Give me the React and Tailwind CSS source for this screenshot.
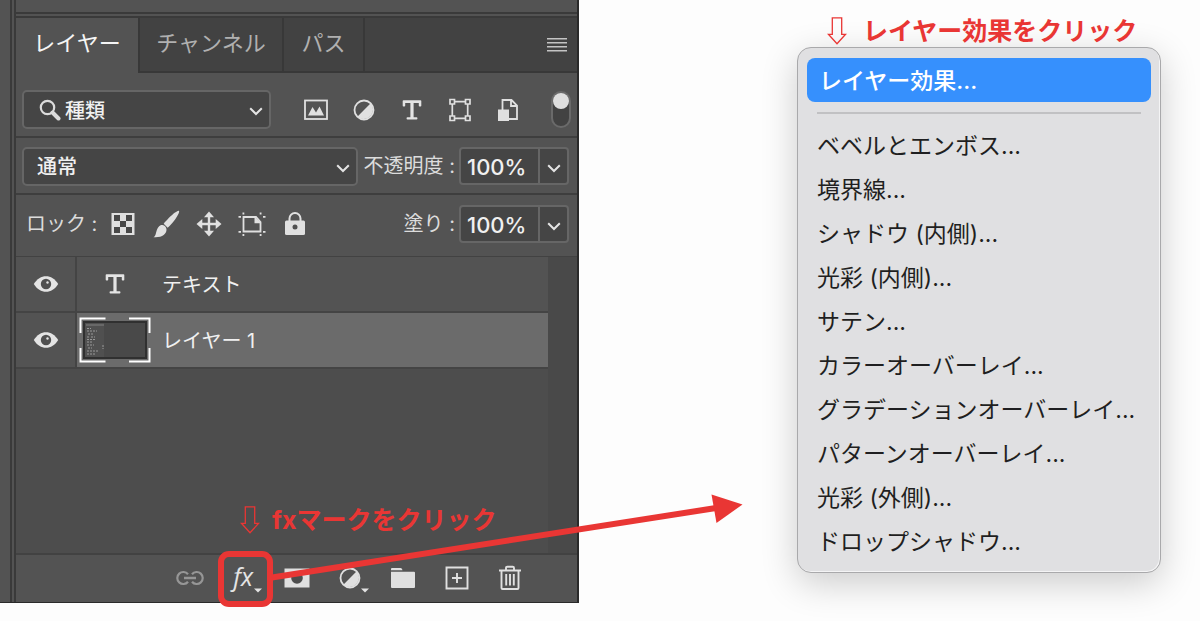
import React from "react";

const font = "font-['Inter','Noto_Sans_CJK_JP',sans-serif]";

function HalfCircle() {
  return (
    <svg width="24" height="24" viewBox="0 0 24 24" aria-hidden="true">
      <circle cx="12" cy="12" r="9.5" fill="none" stroke="#e0e0e0" strokeWidth="1.8" />
      <path d="M18.7 5.3A9.5 9.5 0 0 1 5.3 18.7Z" fill="#e0e0e0" />
    </svg>
  );
}

function TypeIcon() {
  return (
    <svg width="20" height="20" viewBox="0 0 20 20" fill="#e4e4e4" aria-hidden="true">
      <path d="M1.500.2h17q.8 0 .8.800v4.700q0 .8-.8.800h-.9q-.8 0-.8-.8V3h-5.200v14.300h3q.8 0 .8.800v.7q0 .8-.8.800H5.400q-.8 0-.8-.8v-.7q0-.8.8-.8h3V3H3.200v2.700q0 .8-.8.800h-.9q-.8 0-.8-.8V1q0-.8.8-.8z" />
    </svg>
  );
}

function Chevron() {
  return (
    <svg width="14" height="9" viewBox="0 0 14 9" fill="none" stroke="#e4e4e4" strokeWidth="2" aria-hidden="true">
      <path d="M1.200 1.200 7 7l5.800-5.800" />
    </svg>
  );
}

function Eye() {
  return (
    <svg width="26" height="18" viewBox="0 0 26 18" aria-hidden="true">
      <path d="M.8 9C4 3.800 8.300 1.200 13 1.200S22 3.800 25.200 9C22 14.200 17.700 16.800 13 16.800S4 14.200.8 9Z" fill="#e4e4e4" />
      <circle cx="13" cy="9" r="5.200" fill="#505050" />
      <circle cx="14.500" cy="7.500" r="1.200" fill="#e4e4e4" />
    </svg>
  );
}

function DownArrow() {
  return (
    <svg className="shrink-0" width="20" height="28" viewBox="0 0 20 28" fill="none" stroke="#e93634" strokeWidth="1.300" aria-hidden="true">
      <path d="M5.300.8h9.400v16.500h3.900L10 26.800 1.400 17.300h3.900z" />
    </svg>
  );
}

const filters = [
  {
    label: "ピクセルレイヤー",
    icon: (
      <svg width="24" height="22" viewBox="0 0 24 22" aria-hidden="true">
        <rect x="1" y="1.500" width="22" height="18.500" fill="none" stroke="#e0e0e0" strokeWidth="1.800" />
        <path d="M4 16.500 8.500 8l3.500 5.500L15.500 7.500 20 16.500Z" fill="#e0e0e0" />
      </svg>
    ),
  },
  { label: "調整レイヤー", icon: <HalfCircle /> },
  { label: "テキストレイヤー", icon: <TypeIcon /> },
  {
    label: "シェイプレイヤー",
    icon: (
      <svg width="22" height="24" viewBox="0 0 22 24" fill="none" stroke="#e0e0e0" strokeWidth="1.700" aria-hidden="true">
        <path d="M5 3.700h12M5 20.300h12M3.300 5v14M18.700 5v14" />
        <path d="M1 1.500h4.500V6H1zM16.500 1.500H21V6h-4.500zM1 18h4.500v4.500H1zM16.500 18H21v4.500h-4.500z" fill="#535353" />
      </svg>
    ),
  },
  {
    label: "スマートオブジェクト",
    icon: (
      <svg width="22" height="24" viewBox="0 0 22 24" aria-hidden="true">
        <path d="M5.500 12V2h9l5.500 5.500V21h-9M14 2v6h6" fill="none" stroke="#e0e0e0" strokeWidth="1.800" />
        <rect x="1" y="11.500" width="11" height="11.500" fill="#e0e0e0" />
      </svg>
    ),
  },
];

const locks = [
  {
    label: "透明ピクセルをロック",
    icon: (
      <svg width="24" height="24" viewBox="0 0 24 24" aria-hidden="true">
        <rect x=".5" y="1" width="23" height="22" fill="#e0e0e0" />
        <path d="M3 3h6v6H3zM15 3h6v6h-6zM9 9h6v6H9zM3 15h6v6H3zM15 15h6v6h-6z" fill="#484848" />
      </svg>
    ),
  },
  {
    label: "画像ピクセルをロック",
    icon: (
      <svg width="28" height="28" viewBox="0 0 28 28" fill="#e0e0e0" aria-hidden="true">
        <path d="M27 .8c.6.800-.3 3-2 5.700-2.500 4.200-6.300 8.700-9.300 11.200l-4-4C14.300 10.500 19.500 5.300 23 2.600c2-1.500 3.500-2.300 4-1.800Z" />
        <path d="M10.500 15c2.300.4 3.800 2 4 4.300.2 5-5 8.700-13 7.900 2.500-1.200 2-3.600 3.200-6.700 1-3 3-5.900 5.800-5.500Z" />
      </svg>
    ),
  },
  {
    label: "位置をロック",
    icon: (
      <svg width="26" height="26" viewBox="0 0 26 26" fill="#e0e0e0" aria-hidden="true">
        <path d="M13 .5 18 6.300h-3.800v5.500h5.500V8l5.800 5-5.800 5v-3.800h-5.500v5.500H18l-5 5.800-5-5.800h3.800v-5.500H6.300V18L.5 13l5.800-5v3.800h5.500V6.300H8z" />
      </svg>
    ),
  },
  {
    label: "アートボードの自動ネストを防ぐ",
    icon: (
      <svg width="28" height="24" viewBox="0 0 28 24" aria-hidden="true">
        <path d="M5.500 5H18l4.500 5v9.500h-17z" fill="none" stroke="#e0e0e0" strokeWidth="1.800" />
        <path d="M16.500 4.500v6.800h6.800z" fill="#e0e0e0" />
        <path d="M.5 4H3v1.800H.5zM4.500.5h1.800v2H4.500zM25 4h2.500v1.800H25zM21.700.5h1.800v2h-1.800zM.5 19H3v1.800H.5zM4.500 22h1.800v2H4.500zM25 19h2.500v1.800H25zM21.700 22h1.800v2h-1.800z" fill="#e0e0e0" />
      </svg>
    ),
  },
  {
    label: "すべてをロック",
    icon: (
      <svg width="22" height="24" viewBox="0 0 22 24" aria-hidden="true">
        <path d="M5.500 11V6.500a5.500 5.500 0 0 1 11 0V11" fill="none" stroke="#e0e0e0" strokeWidth="2" />
        <rect x="1" y="8.500" width="20" height="14.500" rx="1.500" fill="#e0e0e0" />
        <circle cx="11" cy="15" r="2.500" fill="#505050" />
      </svg>
    ),
  },
];

const menuItems = [
  "ベベルとエンボス...",
  "境界線...",
  "シャドウ (内側)...",
  "光彩 (内側)...",
  "サテン...",
  "カラーオーバーレイ...",
  "グラデーションオーバーレイ...",
  "パターンオーバーレイ...",
  "光彩 (外側)...",
  "ドロップシャドウ...",
];

function Percent({ id, label }) {
  return (
    <>
      <label htmlFor={id} className="ml-auto whitespace-pre text-[20px] text-[#dcdcdc]">
        {label} :
      </label>
      <div className="ml-1 flex h-[38px] w-[110px] shrink-0 rounded-[4px] border-2 border-[#666] bg-[#454545]">
        <input id={id} defaultValue="100%" className="w-0 flex-1 bg-transparent pl-1.5 pt-0.5 text-[22px] font-medium text-[#f0f0f0] outline-none" />
        <button aria-label={label + "を調整"} className="flex w-[29px] items-center justify-center border-l-2 border-[#666] pt-1">
          <Chevron />
        </button>
      </div>
    </>
  );
}

function Select({ label, value, className, pad, children }) {
  return (
    <div className={"relative h-[39px] " + className}>
      <select aria-label={label} defaultValue={value} className={"h-full w-full appearance-none rounded-[5px] border-2 border-[#666] bg-[#454545] pt-0.5 text-[20px] font-medium text-[#f0f0f0] outline-none " + pad}>
        <option>{value}</option>
      </select>
      <div className="pointer-events-none absolute inset-y-0 right-2 flex items-center pt-1">
        <Chevron />
      </div>
      {children}
    </div>
  );
}

function LayerRow({ name, selected, children }) {
  return (
    <li className="flex h-14 border-b-2 border-[#444]">
      <button aria-label={name + "の表示"} className="flex w-[61px] items-center justify-center border-r-2 border-[#444]">
        <Eye />
      </button>
      <div className={"flex flex-1 items-center " + (selected ? "bg-[#6b6b6b]" : "bg-[#535353]")}>
        <div className="flex w-[75px] justify-center">{children}</div>
        <span className="ml-2.5 pt-px text-[20px] text-[#f0f0f0]">{name}</span>
      </div>
    </li>
  );
}

function LayersPanel() {
  return (
    <section className="flex border-b border-r-2 border-[#2a2a2a] bg-[#535353]">
      <div className="w-4 shrink-0 border-r-2 border-[#3a3a3a]">
        <div className="h-full w-3 border-r-2 border-[#3a3a3a]" />
      </div>
      <div className="flex min-w-0 flex-1 flex-col">
        <div className="h-3.5 border-b-2 border-[#3a3a3a]" />
        <div className="h-1 border-b-2 border-[#3a3a3a]" />
        <div role="tablist" className="flex h-[55px] bg-[#424242] text-[22px] text-[#b0b0b0]">
          <button role="tab" aria-selected="true" className="w-[122px] bg-[#535353] pb-1 text-[#f5f5f5]">レイヤー</button>
          <button role="tab" aria-selected="false" className="w-[146px] border-x-2 border-b-2 border-[#383838] pb-0.5">チャンネル</button>
          <button role="tab" aria-selected="false" className="w-[81px] border-b-2 border-r-2 border-[#383838] pb-0.5">パス</button>
          <div className="flex flex-1 items-center justify-end border-b-2 border-[#383838] pr-2.5">
            <button aria-label="パネルメニュー">
              <svg width="20" height="16" viewBox="0 0 20 16" fill="#c4c4c4" aria-hidden="true">
                <path d="M0 1h20v1.500H0zM0 5h20v1.500H0zM0 9h20v1.500H0zM0 13h20v1.500H0z" />
              </svg>
            </button>
          </div>
        </div>

        <div className="flex h-[65px] items-center border-b-2 border-[#3e3e3e] px-1.5 pb-px pt-px">
          <Select label="フィルターの種類" value="種類" className="mt-2.5 w-[249px]" pad="pl-[41px]">
            <svg className="pointer-events-none absolute left-[17px] top-[9px]" width="22" height="22" viewBox="0 0 22 22" fill="none" stroke="#dcdcdc" aria-hidden="true">
              <circle cx="8.500" cy="8.500" r="6.700" strokeWidth="2.200" />
              <path d="m13.500 13.500 6 6" strokeWidth="4" strokeLinecap="round" />
            </svg>
          </Select>
          <div className="ml-[21px] mt-2.5 flex">
            {filters.map((f) => (
              <button key={f.label} aria-label={f.label} className="flex w-12 items-center justify-center">{f.icon}</button>
            ))}
          </div>
          <label className="relative ml-auto mt-2.5 flex h-[37px] w-5 justify-center rounded-full border-2 border-[#6a6a6a] bg-[#424242]">
            <input type="checkbox" defaultChecked aria-label="フィルターのオン/オフ" className="h-4 w-4 shrink-0 appearance-none rounded-full bg-[#dedede]" />
          </label>
        </div>

        <div className="flex h-[57px] items-center border-b-2 border-[#3e3e3e] pl-1.5 pr-2 pt-px">
          <Select label="描画モード" value="通常" className="mr-1.5 min-w-0 flex-1" pad="pl-[13px]" />
          <Percent id="opacity" label="不透明度" />
        </div>

        <div className="flex h-[61px] items-center pb-[3px] pl-2.5 pr-2">
          <span className="w-[75px] whitespace-pre text-[20px] text-[#dcdcdc]">ロック :</span>
          <div className="flex">
            {locks.map((l) => (
              <button key={l.label} aria-label={l.label} className="flex w-[43px] items-center justify-center">{l.icon}</button>
            ))}
          </div>
          <Percent id="fill" label="塗り" />
        </div>

        <div className="flex h-[299px] border-b-2 border-t border-[#424242] bg-[#4d4d4d]">
          <div className="flex flex-1 flex-col">
            <ul className="bg-[#535353]">
              <LayerRow name="テキスト"><TypeIcon /></LayerRow>
              <LayerRow name="レイヤー 1" selected>
                <svg width="72" height="46" viewBox="0 0 72 46" aria-hidden="true">
                  <rect x="4" y="4" width="64" height="38" fill="#303030" />
                  <rect x="6" y="6" width="60" height="34" fill="#494949" />
                  <path d="M6 6h19v34H6z" fill="#505050" />
                  <path d="M7 7h18v2H7z" fill="#686868" />
                  <path d="M8 11.500h4M8 14h10M9 17h6M8 20h2m2 0h4M8 22.500h9M8 25h5M8 28h7M9 31h4M8 34h11M8 37h8M24 28v4" stroke="#999" strokeDasharray="2 1" fill="none" />
                  <path d="M1.500 16V1.500h25M50 1.500h20.500V16M70.500 31v13.500H50M26.500 44.500h-25V31" stroke="#fff" strokeWidth="2" fill="none" />
                </svg>
              </LayerRow>
            </ul>
            <p className="mb-[15px] mt-auto flex items-center gap-3 pl-56 text-[25px] font-bold leading-9 text-[#e93634]">
              <DownArrow />
              fxマークをクリック
            </p>
          </div>
          <div className="w-[29px] bg-[#494949]" />
        </div>

        <div className="grid h-[47px] grid-cols-7 pb-px pl-[147px] pr-10">
          <button aria-label="レイヤーをリンク" className="flex items-center justify-center">
            <svg width="28" height="16" viewBox="0 0 28 16" fill="none" stroke="#969696" strokeWidth="2.200" aria-hidden="true">
              <path d="M12 4.300A6 6 0 1 0 12 11.700M16 4.300a6 6 0 1 1 0 7.400" />
              <path d="M8 8h12" strokeWidth="2.500" />
            </svg>
          </button>
          <button aria-label="レイヤースタイルを追加" className="relative flex items-center justify-center">
            <span className="pb-1 font-['Open_Sans'] text-[25px] italic leading-none text-[#e4e4e4]">fx</span>
            <span className="absolute -top-1 left-0.5 h-14 w-[55px] rounded-[11px] border-6 border-[#e93634]" />
            <svg className="absolute bottom-2 right-2" width="8" height="5" viewBox="0 0 8 5" fill="#e4e4e4" aria-hidden="true"><path d="M0 .5h8L4 4.500z" /></svg>
          </button>
          <button aria-label="マスクを追加" className="flex items-center justify-center">
            <svg width="26" height="20" viewBox="0 0 26 20" aria-hidden="true">
              <rect x=".5" y=".5" width="25" height="19" fill="#e0e0e0" />
              <circle cx="13" cy="10" r="5.800" fill="#4d4d4d" />
            </svg>
          </button>
          <button aria-label="塗りつぶしまたは調整レイヤー" className="relative flex items-center justify-center">
            <HalfCircle />
            <svg className="absolute bottom-2 right-2" width="8" height="5" viewBox="0 0 8 5" fill="#e4e4e4" aria-hidden="true"><path d="M0 .5h8L4 4.500z" /></svg>
          </button>
          <button aria-label="新規グループ" className="flex items-center justify-center">
            <svg width="26" height="22" viewBox="0 0 26 22" fill="#e0e0e0" aria-hidden="true">
              <path d="M1 3.200V2Q1 1 2 1h8.500q1 0 1.500 1l.5 1.200zM1 4.800h23q1 0 1 1V20q0 1-1 1H2q-1 0-1-1z" />
            </svg>
          </button>
          <button aria-label="新規レイヤー" className="flex items-center justify-center">
            <svg width="24" height="24" viewBox="0 0 24 24" fill="none" stroke="#e0e0e0" strokeWidth="1.900" aria-hidden="true">
              <path d="M1.500 1.500h21v21h-21zM12 7v10M7 12h10" />
            </svg>
          </button>
          <button aria-label="レイヤーを削除" className="flex items-center justify-center">
            <svg width="24" height="26" viewBox="0 0 24 26" fill="none" stroke="#e0e0e0" strokeWidth="1.900" aria-hidden="true">
              <path d="M1 5.500h22M3.500 5.500V23q0 1 1 1h15q1 0 1-1V5.500M8 5V3q0-1.300 1.300-1.300h5.400Q16 1.700 16 3v2M8.200 9v11.500M12 9v11.500M15.800 9v11.500" />
            </svg>
          </button>
        </div>
      </div>
    </section>
  );
}

export default function App() {
  return (
    <main className={"relative grid min-h-screen grid-cols-[579fr_621fr] items-start overflow-hidden bg-[#fdfdfd] " + font}>
      <LayersPanel />
      <section className="flex justify-end pr-[39px]">
        <div className="w-[364px]">
          <h1 className="flex h-[47px] items-center gap-4 whitespace-nowrap pl-[30px] pt-3.5 text-[25px] font-bold leading-8 text-[#e93634]">
            <DownArrow />
            レイヤー効果をクリック
          </h1>
          <div role="menu" className="rounded-[14px] border border-[#a9a9ab] bg-[#e0e0e2] px-[9px] pb-2 pt-2.5 text-[23px] text-[#1f1f21] shadow-[0_10px_36px_rgba(0,0,0,0.2),inset_-1px_-1px_0_#f4f4f5]">
            <button role="menuitem" className="block h-11 w-full rounded-[8px] bg-[#3690fd] px-3 pt-0.5 text-left font-medium leading-none text-white">
              レイヤー効果...
            </button>
            <hr className="mx-2.5 mb-2.5 mt-2.5 border-t-2 border-[#c1c1c3]" />
            {menuItems.map((item) => (
              <button key={item} role="menuitem" className="block h-11 w-full whitespace-nowrap px-2.5 text-left leading-none">
                {item}
              </button>
            ))}
          </div>
        </div>
      </section>
      <svg className="pointer-events-none absolute left-0 top-0" width="750" height="621" viewBox="0 0 750 621" aria-hidden="true">
        <path d="M272 577.500 716 508" stroke="#e93634" strokeWidth="6" />
        <path d="m711.500 494.500 31 10-26 18.500z" fill="#e93634" />
      </svg>
    </main>
  );
}
